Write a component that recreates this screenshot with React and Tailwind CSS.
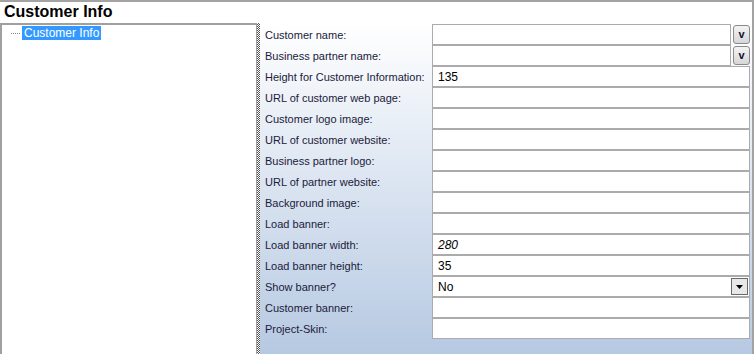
import React from 'react';

// Property rows of the customer info editor
const rows = [
  { label: 'Customer name:', kind: 'combo' },
  { label: 'Business partner name:', kind: 'combo' },
  { label: 'Height for Customer Information:', value: '135' },
  { label: 'URL of customer web page:' },
  { label: 'Customer logo image:' },
  { label: 'URL of customer website:' },
  { label: 'Business partner logo:' },
  { label: 'URL of partner website:' },
  { label: 'Background image:' },
  { label: 'Load banner:' },
  { label: 'Load banner width:', value: '280', italic: true },
  { label: 'Load banner height:', value: '35' },
  { label: 'Show banner?', kind: 'select', value: 'No' },
  { label: 'Customer banner:' },
  { label: 'Project-Skin:' },
];

const ComboButton = () => (
  <div className="w-[17px] h-[19px] ml-[2px] mt-[1px] rounded-[3px] border border-[#8a8a8a] bg-gradient-to-b from-[#f4f4f4] to-[#d6d6d6] flex items-center justify-center text-[11px] font-bold text-[#101030] leading-none">
    v
  </div>
);

const Row = ({ label, kind, value, italic }) => (
  <div className="flex h-[21px] items-center">
    <div className="w-[172px] shrink-0 text-[#1b1b3a] pl-[5px] pt-[2px] whitespace-nowrap text-[11px]">{label}</div>
    {kind === 'combo' ? (
      <div className="flex h-[21px] w-[318px]">
        <div className="h-[21px] w-[299px] border border-[#ababab] bg-white" />
        <ComboButton />
      </div>
    ) : (
      <div className="h-[21px] w-[318px] border border-[#ababab] bg-white flex items-center pl-[5px] relative">
        <span className={italic ? 'italic' : ''}>{value}</span>
        {kind === 'select' && (
          <div className="absolute right-[1px] top-[1px] w-[17px] h-[17px] border border-[#6a6a6a] bg-[#e8e8e8] flex items-center justify-center">
            <svg width="7" height="4" viewBox="0 0 7 4"><path d="M0 0h7L3.5 4z" fill="#000" /></svg>
          </div>
        )}
      </div>
    )}
  </div>
);

export default function App() {
  return (
    <div
      className="w-[754px] h-[354px] overflow-hidden bg-white border-t-2 border-[#a3a3a3] flex flex-col text-[12px] text-black"
      style={{ fontFamily: '"Liberation Sans", Arial, sans-serif' }}
    >
      <div className="h-[21px] shrink-0 pl-[4px] text-[16px] font-bold leading-[20px] border-r-2 border-[#a3a3a3]">
        Customer Info
      </div>
      <div className="flex flex-1 min-h-0">
        {/* tree */}
        <div className="w-[257px] shrink-0 bg-white border-l-2 border-t-2 border-r border-[#a0a0a0] pt-[1px]">
          <div className="flex items-center h-[14px]">
            <div className="w-[9px] ml-[9px] mr-[2px] border-t border-dotted border-[#888]" />
            <span className="bg-[#3399ff] text-white px-[2px] leading-[14px]">Customer Info</span>
          </div>
        </div>
        {/* splitter */}
        <div className="w-[3px] shrink-0 bg-[repeating-conic-gradient(#555_0%_25%,#fff_0%_50%)] bg-[length:2px_2px]" />
        {/* property grid */}
        <div className="flex-1 bg-gradient-to-b from-white to-[#b6c9e2] border-r-2 border-[#a3a3a3] pt-[1px]">
          {rows.map((r) => (
            <Row key={r.label} {...r} />
          ))}
        </div>
      </div>
    </div>
  );
}
